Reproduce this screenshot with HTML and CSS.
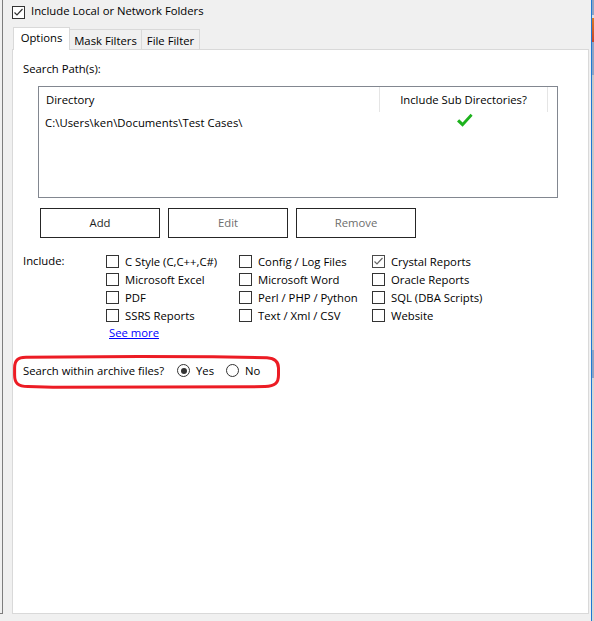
FILE: index.html
```html
<!DOCTYPE html>
<html>
<head>
<meta charset="utf-8">
<link rel="stylesheet" href="styles.css">
</head>
<body>
<div class="screen">
  <div class="left-edge"></div>
  <div class="main">
    <div class="header">
      <span class="cb checked"><svg viewBox="0 0 13 13"><polyline points="2.5,6.5 5,9 10.5,3" /></svg></span>
      <span class="header-label">Include Local or Network Folders</span>
    </div>
    <div class="tabs">
      <div class="tab active">Options</div>
      <div class="tab mask">Mask Filters</div>
      <div class="tab file">File Filter</div>
    </div>
    <div class="panel">
      <div class="section-label">Search Path(s):</div>
      <div class="listbox">
        <div class="lv-header">
          <div class="lv-col dir">Directory</div>
          <div class="lv-col sub">Include Sub Directories?</div>
          <div class="lv-col rest"></div>
        </div>
        <div class="lv-row">
          <div class="lv-cell dir">C:\Users\ken\Documents\Test Cases\</div>
          <div class="lv-cell sub"><svg class="tick" viewBox="0 0 16 15"><polygon points="0,8.5 2.2,6.3 5.6,9.6 13.6,0.8 15.6,2.8 5.6,13.8" /></svg></div>
        </div>
      </div>
      <div class="buttons">
        <div class="btn">Add</div>
        <div class="btn disabled">Edit</div>
        <div class="btn disabled">Remove</div>
      </div>
      <div class="include">
        <div class="include-label">Include:</div>
        <div class="include-grid">
          <div class="opt"><span class="cb"></span>C Style (C,C++,C#)</div>
          <div class="opt"><span class="cb"></span>Config / Log Files</div>
          <div class="opt"><span class="cb checked soft"><svg viewBox="0 0 13 13"><polyline points="2.5,6.5 5,9 10.5,3" /></svg></span>Crystal Reports</div>
          <div class="opt"><span class="cb"></span>Microsoft Excel</div>
          <div class="opt"><span class="cb"></span>Microsoft Word</div>
          <div class="opt"><span class="cb"></span>Oracle Reports</div>
          <div class="opt"><span class="cb"></span>PDF</div>
          <div class="opt"><span class="cb"></span>Perl / PHP / Python</div>
          <div class="opt"><span class="cb"></span>SQL (DBA Scripts)</div>
          <div class="opt"><span class="cb"></span>SSRS Reports</div>
          <div class="opt"><span class="cb"></span>Text / Xml / CSV</div>
          <div class="opt"><span class="cb"></span>Website</div>
        </div>
      </div>
      <a class="see-more" href="#">See more</a>
      <div class="archive">
        <span class="archive-label">Search within archive files?</span>
        <span class="radio-opt yes"><span class="radio on"></span>Yes</span>
        <span class="radio-opt"><span class="radio"></span>No</span>
        <svg class="annotation" viewBox="0 0 268 34"><path d="M13 2.3 C 60 1.6, 140 1.4, 200 1.8 L 254 2.8 C 262 3.4, 265.5 6.5, 265.5 13 L 265.5 20 C 265.5 28, 262 31.4, 252 31.6 L 150 32 L 40 32.2 L 15 31.6 C 5 31.2, 1.6 28.5, 1.6 20 L 1.6 13 C 1.6 5.5, 4.5 2.5, 13 2.3 Z" /></svg>
      </div>
    </div>
  </div>
  <div class="right-edge"><span class="gap"></span><span class="blue"></span><span class="other"></span></div>
</div>
</body>
</html>
```

FILE: styles.css
```css
html, body {
  margin: 0;
  padding: 0;
  background: #f0f0f0;
}
body {
  font-family: "Open Sans", "Noto Sans", sans-serif;
  font-size: 11.3px;
  line-height: 15px;
  color: #000;
}
.screen {
  width: 594px;
  height: 621px;
  display: flex;
  overflow: hidden;
  background: #f0f0f0;
}
.left-edge {
  width: 2px;
  height: 613px;
  border-right: 1px solid #7d7d7d;
  border-bottom: 1px solid #7d7d7d;
  flex: none;
}
.main {
  width: 577px;
  padding-left: 9px;
  flex: none;
}
.header {
  height: 27px;
  box-sizing: border-box;
  padding-top: 3px;
  display: flex;
  align-items: flex-start;
}
.header .cb {
  margin-top: 3px;
}
.header-label {
  margin-left: 6px;
}
.cb {
  width: 13px;
  height: 13px;
  box-sizing: border-box;
  border: 1px solid #333;
  background: #fff;
  display: inline-block;
  flex: none;
  position: relative;
}
.cb svg {
  position: absolute;
  left: -1px;
  top: -1px;
  width: 13px;
  height: 13px;
}
.cb polyline {
  fill: none;
  stroke: #333;
  stroke-width: 1.2;
}
.cb.soft {
  border-color: #4a4a4a;
}
.cb.soft polyline {
  stroke: #666;
}
.tabs {
  height: 23px;
  margin-bottom: -1px;
  margin-left: 1px;
  display: flex;
  align-items: flex-start;
  position: relative;
  z-index: 1;
}
.tab {
  box-sizing: border-box;
  height: 20px;
  margin-top: 2px;
  border: 1px solid #d9d9d9;
  border-bottom: none;
  background: #f0f0f0;
  text-align: center;
  line-height: 19px;
  padding-top: 3px;
}
.tab.active {
  height: 23px;
  margin-top: 0;
  width: 57px;
  background: #fff;
  padding-top: 0;
  position: relative;
  z-index: 2;
}
.tab.mask {
  width: 73px;
  margin-left: -1px;
  line-height: 16px;
}
.tab.file {
  width: 59px;
  margin-left: -1px;
  line-height: 16px;
}
.panel {
  width: 577px;
  height: 565px;
  box-sizing: border-box;
  border: 1px solid #d9d9d9;
  background: #fff;
  padding: 11px 0 0 10px;
}
.section-label {
  height: 15px;
}
.listbox {
  margin: 10px 0 0 15px;
  width: 520px;
  height: 112px;
  box-sizing: border-box;
  border: 1px solid #828790;
}
.lv-header {
  display: flex;
  height: 25px;
}
.lv-col {
  box-sizing: border-box;
  height: 25px;
  padding-top: 5px;
}
.lv-col.dir {
  width: 341px;
  padding-left: 7px;
  border-right: 1px solid #e5e5e5;
}
.lv-col.sub {
  width: 168px;
  border-right: 1px solid #e5e5e5;
  text-align: center;
}
.lv-row {
  display: flex;
  height: 17px;
}
.lv-cell.dir {
  width: 341px;
  padding-left: 6px;
  padding-top: 3px;
  box-sizing: border-box;
  letter-spacing: 0.05px;
}
.lv-cell.sub {
  width: 168px;
  display: flex;
  justify-content: center;
  padding-top: 1px;
}
.tick {
  width: 16px;
  height: 15px;
  margin-left: 1px;
}
.tick polygon {
  fill: #1db21d;
}
.buttons {
  display: flex;
  gap: 8px;
  margin: 10px 0 0 17px;
}
.btn {
  width: 120px;
  height: 30px;
  box-sizing: border-box;
  border: 1px solid #262626;
  background: #fff;
  text-align: center;
  line-height: 28px;
  color: #1e1e1e;
}
.btn.disabled {
  color: #6d6d6d;
}
.include {
  display: flex;
  margin-top: 15px;
}
.include-label {
  width: 83px;
  line-height: 16px;
  flex: none;
}
.include-grid {
  display: grid;
  grid-template-columns: 133px 133px 133px;
  grid-auto-rows: 18px;
}
.opt {
  display: flex;
  align-items: flex-start;
  line-height: 17px;
  white-space: nowrap;
}
.opt .cb {
  margin-top: 2px;
  margin-right: 6px;
}
.see-more {
  display: inline-block;
  margin: -2px 0 0 86px;
  color: #0000ff;
  text-decoration: underline;
}
.archive {
  position: relative;
  display: flex;
  align-items: flex-start;
  margin-top: 23px;
  height: 15px;
}
.archive-label {
  width: 154px;
  flex: none;
}
.radio-opt {
  display: flex;
  align-items: flex-start;
}
.radio-opt.yes {
  width: 49px;
}
.radio {
  width: 13px;
  height: 13px;
  box-sizing: border-box;
  border: 1px solid #333;
  border-radius: 50%;
  background: #fff;
  margin: 1px 6px 0 0;
  position: relative;
  flex: none;
}
.radio.on::after {
  content: "";
  position: absolute;
  left: 2.5px;
  top: 2.5px;
  width: 6px;
  height: 6px;
  border-radius: 50%;
  background: #333;
}
.annotation {
  position: absolute;
  left: -10px;
  top: -8px;
  width: 268px;
  height: 34px;
  overflow: visible;
}
.annotation path {
  fill: none;
  stroke: #ec1c24;
  stroke-width: 3;
  stroke-linejoin: round;
}
.right-edge {
  display: flex;
  height: 621px;
  flex: none;
}
.right-edge .gap {
  width: 2px;
  background: #f0f0f0;
}
.right-edge .blue {
  width: 1px;
  background: #1f77d3;
}
.right-edge .other {
  width: 2px;
  background: linear-gradient(to bottom,
    #8ea4c4 0, #8ea4c4 15px,
    #e0e0e0 15px, #e0e0e0 18px,
    #d77a2c 18px, #c9452a 42px,
    #8ea4c4 42px, #8ea4c4 75px,
    #c8c8c8 75px, #c8c8c8 350px,
    #8ea4c4 350px, #8ea4c4 378px,
    #d6d6d6 378px, #d6d6d6 621px);
}
```
